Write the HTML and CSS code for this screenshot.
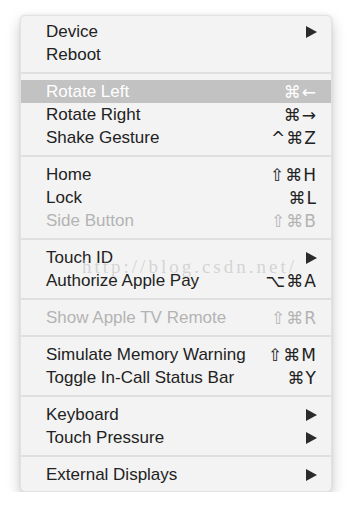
FILE: index.html
```html
<!DOCTYPE html>
<html lang="en">
<head>
    <meta charset="UTF-8">
    <title>Simulator Hardware Menu</title>
    <link rel="stylesheet" href="styles.css">
</head>
<body>
    <div class="menu">
        <div class="item"><span>Device</span><svg class="arrow" viewBox="0 0 11 12"><polygon points="0,0 11,6 0,12"/></svg></div>
        <div class="item"><span>Reboot</span></div>
        <div class="sep"></div>
        <div class="item active"><span>Rotate Left</span><span class="key">⌘←</span></div>
        <div class="item"><span>Rotate Right</span><span class="key">⌘→</span></div>
        <div class="item"><span>Shake Gesture</span><span class="key">^⌘Z</span></div>
        <div class="sep"></div>
        <div class="item"><span>Home</span><span class="key">⇧⌘H</span></div>
        <div class="item"><span>Lock</span><span class="key">⌘L</span></div>
        <div class="item disabled"><span>Side Button</span><span class="key">⇧⌘B</span></div>
        <div class="sep"></div>
        <div class="item"><span>Touch ID</span><svg class="arrow" viewBox="0 0 11 12"><polygon points="0,0 11,6 0,12"/></svg></div>
        <div class="item"><span>Authorize Apple Pay</span><span class="key">⌥⌘A</span></div>
        <div class="sep"></div>
        <div class="item disabled"><span>Show Apple TV Remote</span><span class="key">⇧⌘R</span></div>
        <div class="sep"></div>
        <div class="item"><span>Simulate Memory Warning</span><span class="key">⇧⌘M</span></div>
        <div class="item"><span>Toggle In-Call Status Bar</span><span class="key">⌘Y</span></div>
        <div class="sep"></div>
        <div class="item"><span>Keyboard</span><svg class="arrow" viewBox="0 0 11 12"><polygon points="0,0 11,6 0,12"/></svg></div>
        <div class="item"><span>Touch Pressure</span><svg class="arrow" viewBox="0 0 11 12"><polygon points="0,0 11,6 0,12"/></svg></div>
        <div class="sep"></div>
        <div class="item"><span>External Displays</span><svg class="arrow" viewBox="0 0 11 12"><polygon points="0,0 11,6 0,12"/></svg></div>

        <div class="watermark">http://blog.csdn.net/</div>
    </div>
</body>
</html>
```

FILE: styles.css
```css
body {
    margin: 0;
    background: #fff;
    font-family: "Liberation Sans", Arial, sans-serif;
}
.menu {
    position: relative;
    box-sizing: border-box;
    width: 312px;
    margin: 15px 0 0 20px;
    padding: 4px 0 5px;
    background: #f3f3f3;
    border: 1px solid #e2e2e2;
    border-radius: 5px;
    box-shadow: 0 6px 14px rgba(0, 0, 0, 0.22), 0 0 3px rgba(0, 0, 0, 0.08);
}
.item {
    display: flex;
    justify-content: space-between;
    align-items: center;
    height: 23px;
    padding: 0 14px 0 25px;
    font-size: 17px;
    color: #222;
}
.item.active {
    background: #c2c2c2;
    color: #fff;
}
.item.disabled {
    color: #b3b3b3;
}
.key {
    font-family: "DejaVu Sans", sans-serif;
    font-size: 17px;
    letter-spacing: 1px;
}
.arrow {
    width: 11px;
    height: 12px;
    fill: #2b2b2b;
}
.sep {
    height: 2px;
    margin: 6px 0;
    background: #dfdfdf;
}
.watermark {
    position: absolute;
    left: 61px;
    top: 240px;
    font-family: "Liberation Serif", serif;
    font-size: 19px;
    letter-spacing: 3px;
    color: rgba(190, 190, 190, 0.6);
}
```
